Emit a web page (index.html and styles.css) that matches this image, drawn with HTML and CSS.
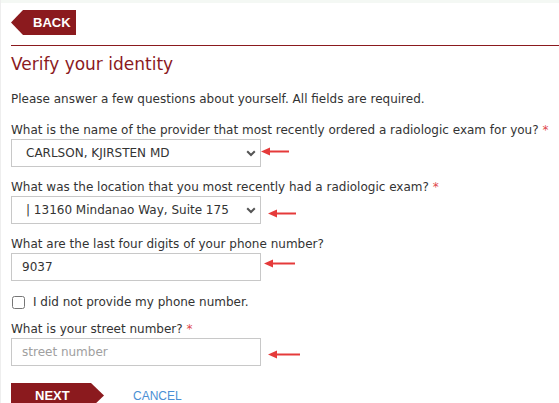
FILE: index.html
```html
<!DOCTYPE html>
<html lang="en">
<head>
<meta charset="utf-8">
<title>Verify your identity</title>
<link rel="stylesheet" href="styles.css">
</head>
<body>
<div class="topbar"></div>
<main class="page">
  <div class="back-row"><a class="btn btn-back" href="#">BACK</a></div>
  <hr class="rule">
  <h1 class="title">Verify your identity</h1>
  <p class="intro">Please answer a few questions about yourself. All fields are required.</p>

  <div class="field">
    <label class="label">What is the name of the provider that most recently ordered a radiologic exam for you? <span class="req">*</span></label>
    <div class="row">
      <div class="select-wrap">
        <select class="control select"><option>CARLSON, KJIRSTEN MD</option></select>
        <svg class="chev" width="10" height="7" viewBox="0 0 10 7"><path d="M1.2 1.2 L5 5 L8.8 1.2" fill="none" stroke="#555" stroke-width="2"/></svg>
      </div>
      <svg class="pointer p1" width="30" height="9" viewBox="0 0 30 9"><path d="M7 4.5 H28" stroke="#e53a3a" stroke-width="2"/><path d="M0 4.5 L9 0.5 L9 8.5 Z" fill="#e53a3a"/></svg>
    </div>
  </div>

  <div class="field">
    <label class="label">What was the location that you most recently had a radiologic exam? <span class="req">*</span></label>
    <div class="row">
      <div class="select-wrap">
        <select class="control select"><option>| 13160 Mindanao Way, Suite 175</option></select>
        <svg class="chev" width="10" height="7" viewBox="0 0 10 7"><path d="M1.2 1.2 L5 5 L8.8 1.2" fill="none" stroke="#555" stroke-width="2"/></svg>
      </div>
      <svg class="pointer p2" width="30" height="9" viewBox="0 0 30 9"><path d="M7 4.5 H28" stroke="#e53a3a" stroke-width="2"/><path d="M0 4.5 L9 0.5 L9 8.5 Z" fill="#e53a3a"/></svg>
    </div>
  </div>

  <div class="field">
    <label class="label">What are the last four digits of your phone number?</label>
    <div class="row">
      <input class="control input" type="text" value="9037">
      <svg class="pointer p3" width="32" height="9" viewBox="0 0 32 9"><path d="M7 4.5 H31" stroke="#e53a3a" stroke-width="2"/><path d="M0 4.5 L9 0.5 L9 8.5 Z" fill="#e53a3a"/></svg>
    </div>
  </div>

  <label class="check-row"><input class="check" type="checkbox"><span>I did not provide my phone number.</span></label>

  <div class="field">
    <label class="label">What is your street number? <span class="req">*</span></label>
    <div class="row">
      <input class="control input" type="text" placeholder="street number">
      <svg class="pointer p4" width="33" height="9" viewBox="0 0 33 9"><path d="M7 4.5 H32" stroke="#e53a3a" stroke-width="2"/><path d="M0 4.5 L9 0.5 L9 8.5 Z" fill="#e53a3a"/></svg>
    </div>
  </div>

  <div class="actions">
    <a class="btn btn-next" href="#">NEXT</a>
    <a class="cancel" href="#">CANCEL</a>
  </div>
</main>
</body>
</html>
```

FILE: styles.css
```css
* { box-sizing: border-box; }

html, body {
  margin: 0;
  padding: 0;
  background: #fff;
}

body {
  font-family: "DejaVu Sans", Verdana, sans-serif;
  font-size: 12px;
  color: #333;
  overflow: hidden;
  border-left: 1px solid #eeeeee;
}

.topbar {
  height: 3px;
  background: #f4f8f4;
}

.page {
  padding: 7px 0 0 10px;
}

.back-row {
  display: flex;
}

.btn {
  display: inline-flex;
  align-items: center;
  height: 25px;
  background: #8b1a1e;
  color: #fff;
  font-family: "Liberation Sans", Arial, sans-serif;
  font-weight: bold;
  font-size: 13px;
  text-decoration: none;
}

.btn-back {
  width: 65px;
  padding-left: 22px;
  clip-path: polygon(0 50%, 12px 0, 100% 0, 100% 100%, 12px 100%);
}

.rule {
  border: 0;
  border-top: 1px solid #8b1a1e;
  margin: 10px 0 0 0;
  height: 0;
}

.title {
  margin: 8px 0 0 0;
  font-size: 17px;
  font-weight: normal;
  line-height: 21px;
  color: #8b1a1e;
  letter-spacing: 0;
}

.intro {
  margin: 16px 0 0 0;
  line-height: 16px;
}

.field {
  display: flex;
  flex-direction: column;
  margin-top: 15px;
}

.field + .field {
  margin-top: 12px;
}

.label {
  line-height: 16px;
  margin-bottom: 1px;
}

.req {
  color: #e0474c;
}

.row {
  display: flex;
  align-items: center;
}

.control {
  width: 250px;
  height: 28px;
  border: 1px solid #c8c8c8;
  border-radius: 0;
  background: #fff;
  font-family: "DejaVu Sans", Verdana, sans-serif;
  font-size: 12px;
  color: #333;
  margin: 0;
  outline: none;
}

.select-wrap {
  position: relative;
  display: flex;
}

.select {
  appearance: none;
  -webkit-appearance: none;
  padding: 0 0 0 14px;
}

.chev {
  position: absolute;
  right: 5px;
  top: 11px;
}

.input {
  padding: 0 10px;
}

.input::placeholder {
  color: #a0a0a0;
}

.pointer { display: block; }
.p1 { margin: -4px 0 0 0; }
.p2 { margin: 7px 0 0 7px; }
.p3 { margin: -7px 0 0 3px; }
.p4 { margin: 5px 0 0 7px; }

.check-row {
  display: flex;
  align-items: center;
  margin-top: 13px;
  line-height: 16px;
}

.check {
  width: 13px;
  height: 13px;
  margin: 0 8px 0 1px;
}

.check-row + .field { margin-top: 11px; }

.actions {
  display: flex;
  align-items: center;
  margin-top: 17px;
  gap: 29px;
}

.btn-next {
  width: 93px;
  padding-left: 24px;
  clip-path: polygon(0 0, 80px 0, 100% 50%, 80px 100%, 0 100%);
}

.cancel {
  color: #4a8fd4;
  text-decoration: none;
  font-family: "Liberation Sans", Arial, sans-serif;
  font-size: 12px;
}
```
